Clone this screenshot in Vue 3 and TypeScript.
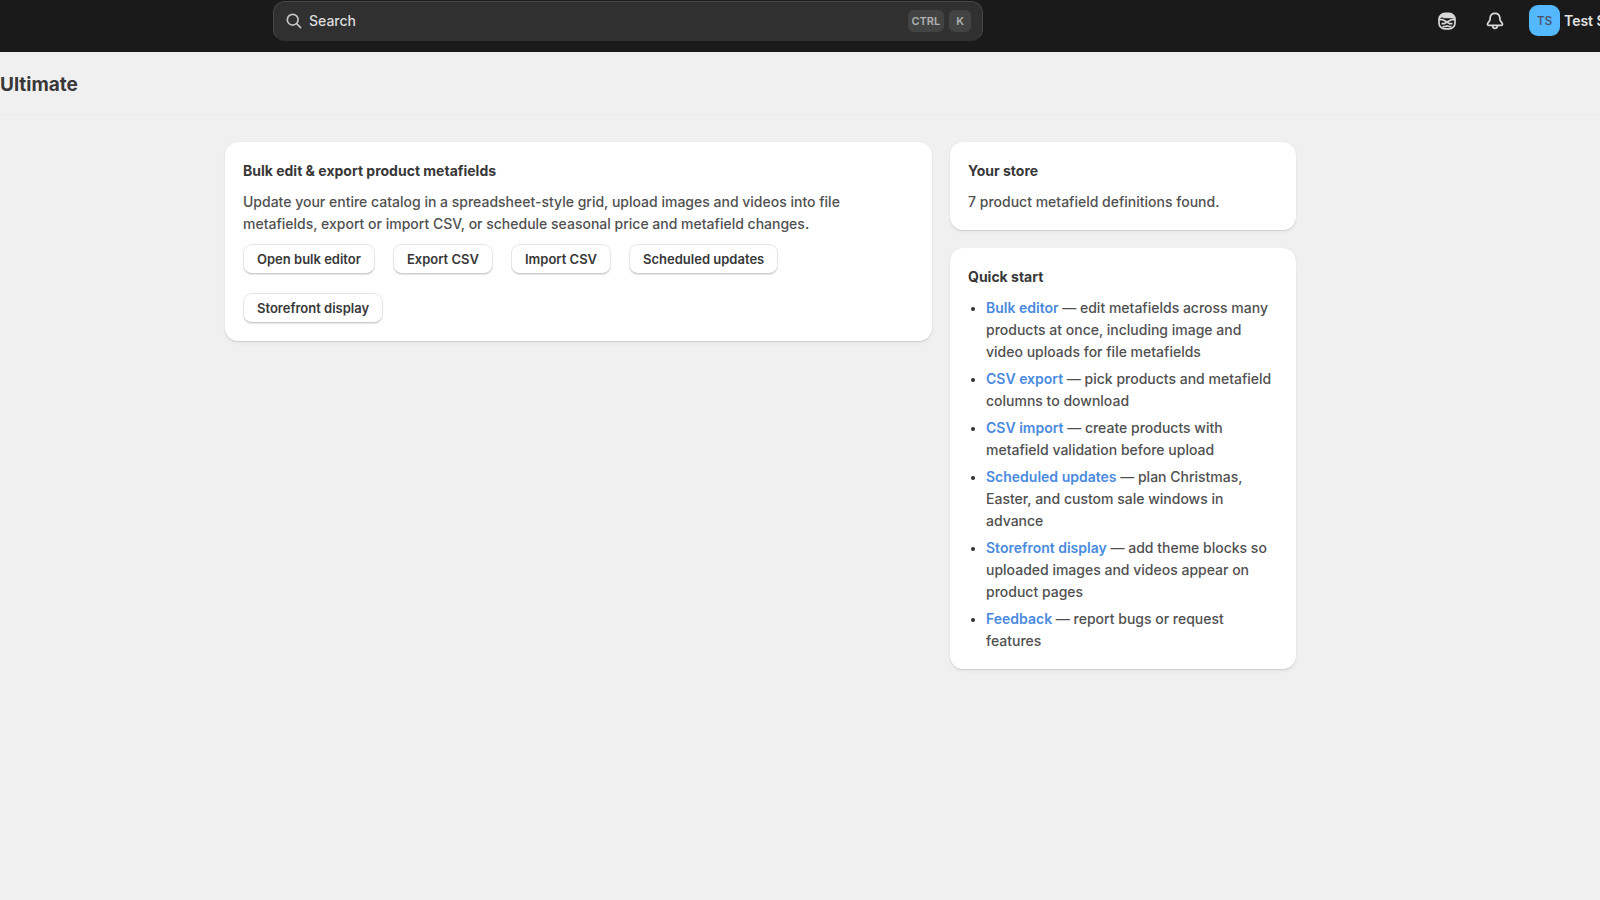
<script setup lang="ts">
interface QuickLink {
  label: string
  text: string
}

const actions: string[] = [
  'Open bulk editor',
  'Export CSV',
  'Import CSV',
  'Scheduled updates',
  'Storefront display',
]

const quickLinks: QuickLink[] = [
  { label: 'Bulk editor', text: 'edit metafields across many products at once, including image and video uploads for file metafields' },
  { label: 'CSV export', text: 'pick products and metafield columns to download' },
  { label: 'CSV import', text: 'create products with metafield validation before upload' },
  { label: 'Scheduled updates', text: 'plan Christmas, Easter, and custom sale windows in advance' },
  { label: 'Storefront display', text: 'add theme blocks so uploaded images and videos appear on product pages' },
  { label: 'Feedback', text: 'report bugs or request features' },
]
</script>

<template>
  <div class="app">
    <header class="topbar">
      <div class="side"></div>
      <button type="button" class="search">
        <svg class="search-icon" viewBox="0 0 16 16" aria-hidden="true">
          <circle cx="6.7" cy="6.7" r="5.4" />
          <path d="M10.7 10.7 14.600 14.600" />
        </svg>
        <span class="search-label">Search</span>
        <kbd>CTRL</kbd>
        <kbd>K</kbd>
      </button>
      <div class="side tools">
        <button type="button" class="icon-button" aria-label="Assistant">
          <svg viewBox="0 0 20 20" aria-hidden="true">
            <path class="fill" d="M2.200 8C2.600 4 5.500 2 10 2S17.400 4 17.800 8L15.500 7.200H7L5 6.200Z" />
            <rect x="2" y="2.300" width="16" height="15.600" rx="6" />
            <path d="M2 8.600h3.200L10 11l4.800-2.400H18M4.500 12.700h2.700L10 11l2.800 1.700h2.700M5.500 15.800 10 15l4.500.8" />
          </svg>
        </button>
        <button type="button" class="icon-button" aria-label="Notifications">
          <svg viewBox="0 0 20 20" aria-hidden="true">
            <path d="M10 2.300c-3 0-4.700 2.100-4.900 4.800L4.900 9.300 2.800 12.200c-.7 1-.2 2.200.9 2.200h12.600c1.100 0 1.600-1.200.9-2.200L15.100 9.300l-.2-2.200C14.700 4.400 13 2.300 10 2.300Z" />
            <path d="M7.600 14.600c0 1.700.9 2.900 2.400 2.900s2.400-1.200 2.400-2.900" />
          </svg>
        </button>
        <button type="button" class="account">
          <span class="avatar">TS</span>
          <span class="account-name">Test S</span>
        </button>
      </div>
    </header>

    <div class="titlebar"><h1>Ultimate</h1></div>

    <main class="content">
      <div class="layout">
        <section class="card">
          <h2>Bulk edit &amp; export product metafields</h2>
          <p class="intro">
            Update your entire catalog in a spreadsheet-style grid, upload images and videos into file
            metafields, export or import CSV, or schedule seasonal price and metafield changes.
          </p>
          <div class="actions">
            <button v-for="action in actions" :key="action" type="button" class="action">{{ action }}</button>
          </div>
        </section>
        <aside class="column">
          <section class="card">
            <h2>Your store</h2>
            <p>7 product metafield definitions found.</p>
          </section>
          <section class="card">
            <h2>Quick start</h2>
            <ul>
              <li v-for="item in quickLinks" :key="item.label">
                <a href="#">{{ item.label }}</a> — {{ item.text }}
              </li>
            </ul>
          </section>
        </aside>
      </div>
    </main>
  </div>
</template>

<style>
body {
  margin: 0;
  background: #f0f0f0;
}
</style>

<style scoped>
.app {
  min-height: 100vh;
  overflow-x: hidden;
  background: #f0f0f0;
  color: #383838;
  font-family: Inter, "Liberation Sans", sans-serif;
  font-size: 14px;
  font-weight: 450;
  line-height: 22px;
}

button {
  font: inherit;
  border: 0;
  margin: 0;
  padding: 0;
  background: none;
}

.topbar {
  display: grid;
  grid-template-columns: 273px minmax(200px, 710px) 1fr;
  align-items: start;
  height: 52px;
  background: #1a1a1a;
  color: #e3e3e3;
}

.search {
  display: flex;
  align-items: center;
  gap: 7px;
  box-sizing: border-box;
  height: 40px;
  margin-top: 1px;
  padding: 0 11px 0 12px;
  border: 1px solid #474747;
  border-bottom-color: #303030;
  border-radius: 12px;
  background: #303030;
  color: #dcdcdc;
  text-align: left;
}

.search-icon {
  width: 16px;
  height: 16px;
  fill: none;
  stroke: #c4c4c4;
  stroke-width: 1.7;
  stroke-linecap: round;
}

.search-label {
  flex: 1;
  font-weight: 500;
}

kbd {
  box-sizing: border-box;
  height: 22px;
  padding: 0 4px;
  border-radius: 6px;
  background: #424443;
  color: #b0b0b0;
  font-family: inherit;
  font-size: 11px;
  font-weight: 600;
}

kbd + kbd {
  margin-left: -2px;
  padding: 0 7px;
}

.tools {
  display: flex;
  justify-content: flex-end;
  align-items: center;
  height: 41px;
  gap: 28px;
}

.icon-button {
  display: flex;
}

.icon-button svg {
  width: 20px;
  height: 20px;
  fill: none;
  stroke: #d8d8d8;
  stroke-width: 1.7;
  stroke-linejoin: round;
}

.icon-button .fill {
  fill: #d8d8d8;
  stroke: none;
}

.account {
  display: flex;
  align-items: center;
  gap: 4px;
  width: 71px;
  margin-left: -4px;
  color: #e3e3e3;
  overflow: hidden;
  white-space: nowrap;
}

.avatar {
  flex: none;
  width: 31px;
  border-radius: 9px;
  background: #54b8ff;
  color: #4a4f66;
  line-height: 31px;
  font-size: 12px;
  font-weight: 500;
  text-align: center;
}

.account-name {
  font-weight: 600;
}

.titlebar {
  display: flex;
  align-items: center;
  box-sizing: border-box;
  height: 63px;
  padding-top: 3px;
  border-bottom: 1px solid #eaeaea;
}

h1 {
  margin: 0;
  font-size: 19px;
  font-weight: 650;
}

.content {
  padding: 27px 79px 27px 0;
}

.layout {
  display: grid;
  grid-template-columns: 707fr 346fr;
  align-items: start;
  gap: 18px;
  max-width: 1071px;
  margin: 0 auto;
}

.column {
  display: grid;
  gap: 18px;
}

.card {
  display: grid;
  gap: 9px;
  padding: 18px 18px 17px;
  border-radius: 13px;
  background: #fff;
  box-shadow: 0 1px 1px #cfcfcf, 0 0 1px #d4d4d4, 0 3px 3px #e9e9e9;
}

h2 {
  margin: 0;
  font-size: 14px;
  font-weight: 650;
}

p {
  margin: 0;
  color: #505050;
}

.intro {
  padding-right: 18px;
}

.actions {
  display: flex;
  flex-wrap: wrap;
  gap: 18px;
}

.action {
  height: 31px;
  padding: 0 14px 2px;
  border-radius: 9px;
  background: #fff;
  box-shadow: inset 0 0 0 1px #e6e6e6, inset 0 -2px 0 #cfcfcf;
  color: #383838;
  font-size: 13px;
  font-weight: 600;
}

ul {
  display: grid;
  gap: 5px;
  margin: 0;
  padding: 0 0 0 18px;
  color: #505050;
}

li::marker {
  color: #303030;
  font-size: 12px;
}

a {
  color: #4a8ade;
  font-weight: 600;
  text-decoration: none;
}
</style>
